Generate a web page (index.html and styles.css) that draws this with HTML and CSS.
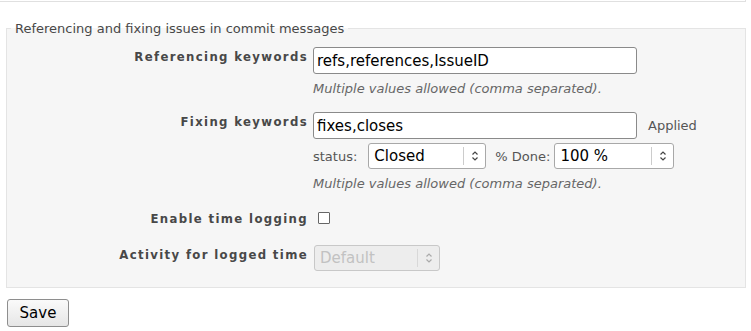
FILE: index.html
```html
<!DOCTYPE html>
<html lang="en">
<head>
    <meta charset="UTF-8">
    <meta name="viewport" content="width=device-width, initial-scale=1.0">
    <title>Repository settings</title>
    <link rel="stylesheet" href="styles.css">
</head>
<body>
    <div class="topbox"></div>

    <form class="settings">
        <fieldset class="box">
            <legend>Referencing and fixing issues in commit messages</legend>

            <div class="row">
                <label class="row-label" for="ref-keywords">Referencing keywords</label>
                <div class="row-field">
                    <input type="text" id="ref-keywords" class="text-input" value="refs,references,IssueID">
                    <p class="hint">Multiple values allowed (comma separated).</p>
                </div>
            </div>

            <div class="row row-fix">
                <label class="row-label" for="fix-keywords">Fixing keywords</label>
                <div class="row-field">
                    <div class="inline">
                        <input type="text" id="fix-keywords" class="text-input" value="fixes,closes">
                        <span class="muted applied">Applied</span>
                    </div>
                    <div class="inline status-line">
                        <span class="muted">status:</span>
                        <span class="select select-status">
                            <select><option>Closed</option></select>
                            <span class="select-arrow">
                                <svg width="8" height="12" viewBox="0 0 8 12"><path d="M1.5 4.5 4 2 6.5 4.5M1.5 7.5 4 10 6.5 7.5" fill="none" stroke="#444" stroke-width="1.2"/></svg>
                            </span>
                        </span>
                        <span class="muted done-label">% Done:</span>
                        <span class="select select-done">
                            <select><option>100 %</option></select>
                            <span class="select-arrow">
                                <svg width="8" height="12" viewBox="0 0 8 12"><path d="M1.5 4.5 4 2 6.5 4.5M1.5 7.5 4 10 6.5 7.5" fill="none" stroke="#444" stroke-width="1.2"/></svg>
                            </span>
                        </span>
                    </div>
                    <p class="hint">Multiple values allowed (comma separated).</p>
                </div>
            </div>

            <div class="row row-time">
                <label class="row-label" for="time-logging">Enable time logging</label>
                <div class="row-field">
                    <input type="checkbox" id="time-logging" class="check">
                </div>
            </div>

            <div class="row row-activity">
                <label class="row-label">Activity for logged time</label>
                <div class="row-field">
                    <span class="select select-activity is-disabled">
                        <select disabled><option>Default</option></select>
                        <span class="select-arrow">
                            <svg width="8" height="12" viewBox="0 0 8 12"><path d="M1.5 4.5 4 2 6.5 4.5M1.5 7.5 4 10 6.5 7.5" fill="none" stroke="#aaa" stroke-width="1.2"/></svg>
                        </span>
                    </span>
                </div>
            </div>
        </fieldset>

        <button type="button" class="btn-save">Save</button>
    </form>
</body>
</html>
```

FILE: styles.css
```css
/* Page */
body {
    margin: 0;
    padding: 0 5px 0 6px;
    font-family: "DejaVu Sans", Verdana, sans-serif;
    color: #333;
    background: #fff;
}

/* Bottom edge of the previous box */
.topbox {
    height: 1px;
    margin: 0 0 19px -6px;
    border-bottom: 1px solid #e0e0e0;
    border-right: 1px solid #e0e0e0;
}

/* Fieldset box */
.box {
    margin: 0;
    padding: 0 0 16px;
    border: 1px solid #e4e4e4;
    background-color: #f6f6f6;
}

.box legend {
    margin-left: 4px;
    padding: 0 4px;
    font-size: 13px;
    color: #484848;
}

/* Form rows */
.row {
    display: flex;
    align-items: flex-start;
    gap: 5px;
    margin-top: 11px;
}

.row-label {
    width: 301px;
    flex-shrink: 0;
    text-align: right;
    font-family: "DejaVu Sans Condensed", "DejaVu Sans", sans-serif;
    font-size: 13px;
    font-weight: bold;
    letter-spacing: 1.35px;
    line-height: 20px;
    color: #484848;
}

.row-field {
    flex: 1;
}

.row-fix {
    margin-top: 13px;
}

.row-time {
    margin-top: 15px;
}

.row-activity {
    margin-top: 16px;
}

.inline {
    display: flex;
    align-items: center;
}

/* Inputs */
.text-input {
    box-sizing: border-box;
    width: 324px;
    height: 27px;
    margin: 0;
    padding: 0 3px;
    border: 1px solid #8a8a8a;
    border-radius: 3px;
    background: #fff;
    font-family: "DejaVu Sans", sans-serif;
    font-size: 15px;
    color: #000;
}

.muted {
    font-size: 13px;
    color: #555;
}

.applied {
    margin-left: 11px;
}

.hint {
    margin: 5px 0 0;
    font-size: 13px;
    font-style: italic;
    line-height: 20px;
    color: #666;
}

.status-line {
    margin-top: 4px;
}

.done-label {
    margin-left: 9px;
}

/* Selects */
.select {
    box-sizing: border-box;
    display: inline-flex;
    height: 26px;
    margin-left: 7px;
    border: 1px solid #a8a8a8;
    border-radius: 3px;
    background: #fff;
}

.select select {
    flex: 1;
    min-width: 0;
    margin: 0;
    padding: 0 5px;
    border: none;
    background: transparent;
    appearance: none;
    -webkit-appearance: none;
    font-family: "DejaVu Sans", sans-serif;
    font-size: 15px;
    color: #000;
}

.select-arrow {
    display: flex;
    align-items: center;
    justify-content: center;
    width: 21px;
    margin: 3px 0;
    border-left: 1px solid #ccc;
}

.select-status {
    width: 118px;
    margin-left: 11px;
}

.select-done {
    width: 120px;
    margin-left: 4px;
}

.select-activity {
    width: 126px;
    margin-left: 1px;
}

.is-disabled {
    border-color: #c8c8c8;
    background: #ededed;
}

.is-disabled select {
    color: #b0b0b0;
}

.is-disabled .select-arrow {
    border-left-color: #d8d8d8;
}

/* Checkbox */
.check {
    box-sizing: border-box;
    appearance: none;
    -webkit-appearance: none;
    width: 12px;
    height: 12px;
    margin: 2px 0 0 5px;
    border: 1px solid #666;
    border-radius: 1px;
    background: #fff;
}

/* Save button */
.btn-save {
    box-sizing: border-box;
    width: 62px;
    height: 28px;
    margin: 11px 0 0 1px;
    padding: 0;
    border: 1px solid #8e8e8e;
    border-radius: 3px;
    background: linear-gradient(#fafafa, #e6e6e6);
    font-family: "DejaVu Sans", sans-serif;
    font-size: 15px;
    color: #000;
}
```
